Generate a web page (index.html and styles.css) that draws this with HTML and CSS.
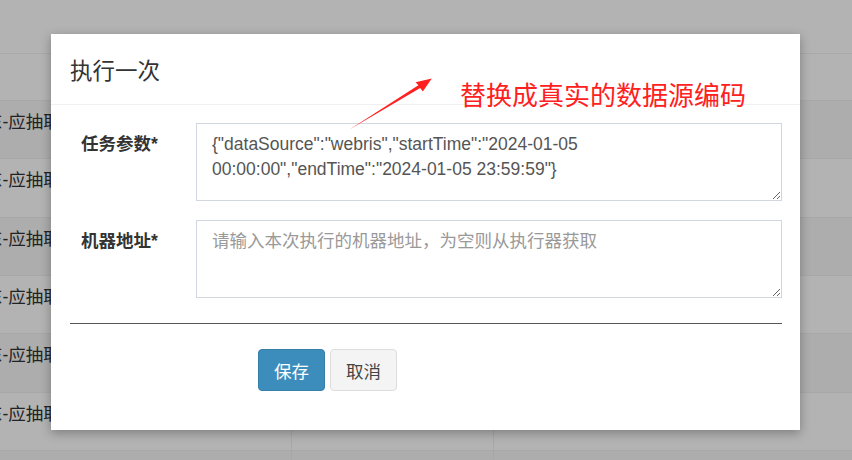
FILE: index.html
```html
<!DOCTYPE html>
<html lang="zh-CN">
<head>
<meta charset="utf-8">
<title>执行一次</title>
<link rel="stylesheet" href="styles.css">
</head>
<body>
<div class="page">
  <div class="topbar"></div>
  <div class="thead"></div>
  <div class="tbody">
    <div class="row"><div class="cell c1"><span class="cell-text">东-应抽取</span></div><div class="cell c2"></div><div class="cell c3"></div></div>
    <div class="row"><div class="cell c1"><span class="cell-text">东-应抽取</span></div><div class="cell c2"></div><div class="cell c3"></div></div>
    <div class="row"><div class="cell c1"><span class="cell-text">东-应抽取</span></div><div class="cell c2"></div><div class="cell c3"></div></div>
    <div class="row"><div class="cell c1"><span class="cell-text">东-应抽取</span></div><div class="cell c2"></div><div class="cell c3"></div></div>
    <div class="row"><div class="cell c1"><span class="cell-text">东-应抽取</span></div><div class="cell c2"></div><div class="cell c3"></div></div>
    <div class="row"><div class="cell c1"><span class="cell-text">东-应抽取</span></div><div class="cell c2"></div><div class="cell c3"></div></div>
    <div class="row row-tail"><div class="cell c1"></div><div class="cell c2"></div><div class="cell c3"></div></div>
  </div>
</div>

<div class="modal">
  <div class="modal-header">
    <h4 class="modal-title">执行一次</h4>
  </div>
  <div class="modal-body">
    <form class="form">
      <div class="form-group">
        <label class="control-label">任务参数*</label>
        <textarea class="form-control">{"dataSource":"webris","startTime":"2024-01-05 00:00:00","endTime":"2024-01-05 23:59:59"}</textarea>
      </div>
      <div class="form-group last">
        <label class="control-label">机器地址*</label>
        <textarea class="form-control" placeholder="请输入本次执行的机器地址，为空则从执行器获取"></textarea>
      </div>
      <hr class="divider">
      <div class="actions">
        <button type="button" class="btn btn-primary">保存</button>
        <button type="button" class="btn btn-default">取消</button>
      </div>
    </form>
  </div>
</div>

<svg class="annot-arrow" width="852" height="460" viewBox="0 0 852 460">
  <polygon points="349.5,129.5 420.2,87.9 422.8,91.6 431.8,78.4 415.6,82.3 418.4,85.2" fill="#ff2020"/>
</svg>
<div class="annot-text">替换成真实的数据源编码</div>
</body>
</html>
```

FILE: styles.css
```css
html, body {
  margin: 0;
  padding: 0;
}
body {
  width: 852px;
  height: 460px;
  overflow: hidden;
  background: #b3b3b3;
  font-family: "Liberation Sans", "Noto Sans CJK SC", sans-serif;
  font-size: 17.5px;
  color: #333;
  position: relative;
}

/* dimmed page behind the dialog */
.page {
  display: flex;
  flex-direction: column;
}
.topbar {
  height: 54px;
  border-bottom: 1px solid #a9a9a9;
  box-sizing: border-box;
}
.thead {
  height: 46px;
}
.tbody {
  display: flex;
  flex-direction: column;
}
.row {
  display: flex;
  height: 58.33px;
  box-sizing: border-box;
  border-top: 1px solid #a8a8a8;
  background: #b3b3b3;
}
.row:nth-child(odd) {
  background: #adadad;
}
.row.row-tail {
  height: 10px;
}
.cell {
  box-sizing: border-box;
}
.c1 {
  width: 291px;
  overflow: hidden;
  white-space: nowrap;
  padding-top: 9px;
  line-height: 25px;
}
.c2 {
  width: 202px;
  border-left: 1px solid #a8a8a8;
}
.c3 {
  flex: 1;
  border-left: 1px solid #a8a8a8;
}
.cell-text {
  display: inline-block;
  margin-left: -15px;
  color: #222;
  font-family: "Liberation Sans", "Noto Sans CJK SC", sans-serif;
}

/* dialog */
.modal {
  position: absolute;
  left: 51px;
  top: 34px;
  width: 749px;
  height: 396px;
  background: #fff;
  box-shadow: 0 3px 10px rgba(0, 0, 0, 0.3);
  box-sizing: border-box;
}
.modal-header {
  padding: 18.75px 19px;
  border-bottom: 1px solid #f1f1f1;
}
.modal-title {
  margin: 0;
  font-size: 22.5px;
  line-height: 32px;
  font-weight: normal;
  color: #333;
  font-family: "Noto Sans CJK SC", sans-serif;
}
.modal-body {
  padding: 18.75px 18px 19px 19px;
}
.form-group {
  display: grid;
  grid-template-columns: 126px 1fr;
  margin-bottom: 18.75px;
}
.form-group.last {
  margin-bottom: 0;
}
.control-label {
  padding: 8.75px 0 0 11px;
  font-weight: bold;
  line-height: 25px;
  font-size: 17.5px;
  color: #333;
}
.form-control {
  display: block;
  width: 100%;
  height: 78px;
  box-sizing: border-box;
  margin: 0;
  padding: 7.5px 15px;
  border: 1px solid #d2d6de;
  border-radius: 0;
  font-family: "Liberation Sans", "Noto Sans CJK SC", sans-serif;
  font-size: 17.5px;
  line-height: 25px;
  color: #555;
  background: #fff;
}
.form-control::placeholder {
  color: #999;
}
.divider {
  margin: 25px 0 25px 0;
  border: 0;
  border-top: 1px solid #585858;
  height: 0;
}
.actions {
  display: flex;
  gap: 5px;
  margin-left: 188px;
}
.btn {
  padding: 7.5px 15px;
  font-size: 17.5px;
  line-height: 25px;
  border-radius: 4px;
  border: 1px solid transparent;
  font-family: "Noto Sans CJK SC", sans-serif;
  cursor: pointer;
}
.btn-primary {
  background: #3c8dbc;
  border-color: #367fa9;
  color: #fff;
}
.btn-default {
  background: #f4f4f4;
  border-color: #ddd;
  color: #444;
}

/* red screenshot annotation drawn over the page */
.annot-arrow {
  position: absolute;
  left: 0;
  top: 0;
  pointer-events: none;
}
.annot-text {
  position: absolute;
  left: 460px;
  top: 79px;
  font-family: "Noto Sans CJK SC", sans-serif;
  font-size: 26px;
  line-height: 30px;
  color: #ff2020;
  white-space: nowrap;
}
```
